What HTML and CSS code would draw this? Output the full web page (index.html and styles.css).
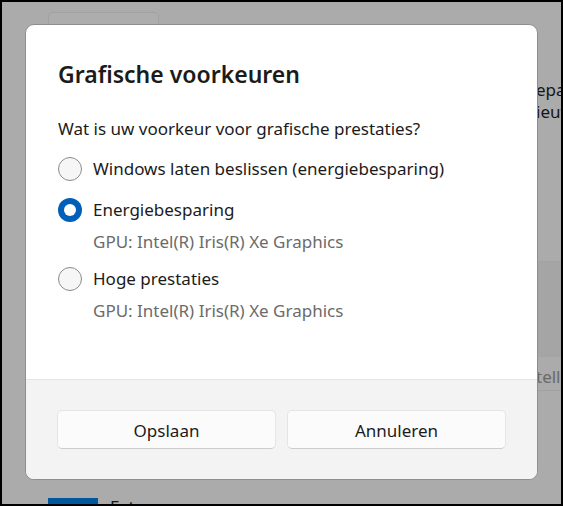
FILE: index.html
```html
<html>
    <head>
        <meta name="viewport" content="width=device-width, initial-scale=1">
        <link rel="stylesheet" href="styles.css">
    </head>

    <body>
        <div class="screen">
            <div class="page">
                <div class="toolbar">
                    <button class="page-button">Bladeren</button>
                </div>
                <div class="app-info">
                    <div>epast</div>
                    <div>ieuw</div>
                </div>
                <div class="band"></div>
                <div class="setting-row">
                    <span class="setting-text">tellen</span>
                </div>
                <div class="tile-row">
                    <div class="tile"></div>
                    <span>Extra</span>
                </div>
            </div>

            <div class="dialog">
                <div class="dialog-body">
                    <h1 class="title">Grafische voorkeuren</h1>
                    <p class="question">Wat is uw voorkeur voor grafische prestaties?</p>

                    <div class="options">
                        <div class="option">
                            <span class="radio"></span>
                            <span class="label">Windows laten beslissen (energiebesparing)</span>
                        </div>
                        <div class="option">
                            <span class="radio checked"></span>
                            <span class="label">Energiebesparing</span>
                            <span class="gpu">GPU: Intel(R) Iris(R) Xe Graphics</span>
                        </div>
                        <div class="option">
                            <span class="radio"></span>
                            <span class="label">Hoge prestaties</span>
                            <span class="gpu">GPU: Intel(R) Iris(R) Xe Graphics</span>
                        </div>
                    </div>
                </div>

                <div class="dialog-footer">
                    <button class="btn">Opslaan</button>
                    <button class="btn">Annuleren</button>
                </div>
            </div>
        </div>
    </body>
</html>
```

FILE: styles.css
```css
* {
  box-sizing: border-box;
}

body {
  margin: 0;
  background-color: #000;
  font-family: "Noto Sans", "Open Sans", sans-serif;
  color: #1b1b1b;
}

.screen {
  position: relative;
  width: 559px;
  height: 502px;
  margin: 2px;
  background-color: #ababab;
  overflow: hidden;
}

/* the page behind the dialog (dimmed) */
.page {
  padding: 10px 0 0 46px;
  font-size: 17px;
  color: #161616;
}

.page-button {
  display: block;
  width: 111px;
  height: 34px;
  padding: 1px 0 0 24px;
  text-align: left;
  line-height: 24px;
  font-family: inherit;
  font-size: 17px;
  color: #161616;
  background-color: #adadad;
  border: 1px solid #a2a2a2;
  border-radius: 5px;
}

.app-info {
  margin: 33px 0 0 488px;
  line-height: 22px;
  white-space: nowrap;
}

.band {
  height: 96px;
  margin-top: 138px;
  background-color: #a5a5a5;
  border-top: 1px solid #a2a2a2;
}

.setting-row {
  height: 34px;
  padding-left: 488px;
  line-height: 40px;
  white-space: nowrap;
  border-bottom: 1px solid #a1a1a1;
}

.setting-text {
  color: #696969;
}

.tile-row {
  display: flex;
  gap: 12px;
  margin-top: 107px;
}

.tile {
  width: 50px;
  height: 40px;
  background-color: #00579c;
}

.tile-row span {
  margin-top: -3px;
  line-height: 24px;
}

/* dialog */
.dialog {
  position: absolute;
  left: 23px;
  top: 22px;
  width: 513px;
  height: 456px;
  display: flex;
  flex-direction: column;
  background-color: #fff;
  border: 1px solid #8e8e8e;
  border-radius: 9px;
  overflow: hidden;
}

.dialog-body {
  flex: 1;
  padding: 33px 31px 0 32px;
}

.title {
  margin: 0;
  font-size: 23px;
  line-height: 32px;
  font-weight: 600;
}

.question {
  margin: 27px 0 0;
  font-size: 17px;
  line-height: 24px;
}

.options {
  display: flex;
  flex-direction: column;
  gap: 17px;
  margin-top: 16px;
}

.option {
  display: grid;
  grid-template-columns: 24px 1fr;
  column-gap: 11px;
  align-items: center;
  font-size: 17px;
  line-height: 24px;
}

.radio {
  width: 24px;
  height: 24px;
  border-radius: 50%;
  border: 1px solid #8b8b8b;
  background-color: #f6f6f6;
}

.radio.checked {
  position: relative;
  border: none;
  background-color: #005fb8;
}

.radio.checked:after {
  content: "";
  position: absolute;
  left: 6px;
  top: 6px;
  width: 12px;
  height: 12px;
  border-radius: 50%;
  background-color: #fff;
}

.gpu {
  grid-column: 2;
  margin: 8px 0 -4px;
  color: #6b6b6b;
}

.dialog-footer {
  display: flex;
  gap: 11px;
  height: 100px;
  padding: 30px 31px 0;
  background-color: #f3f3f3;
  border-top: 1px solid #e5e5e5;
}

.btn {
  flex: 1;
  height: 39px;
  padding-top: 3px;
  font-family: inherit;
  font-size: 17px;
  color: #1b1b1b;
  background-color: #fbfbfb;
  border: 1px solid #e5e5e5;
  border-bottom-color: #cccccc;
  border-radius: 5px;
}
```
